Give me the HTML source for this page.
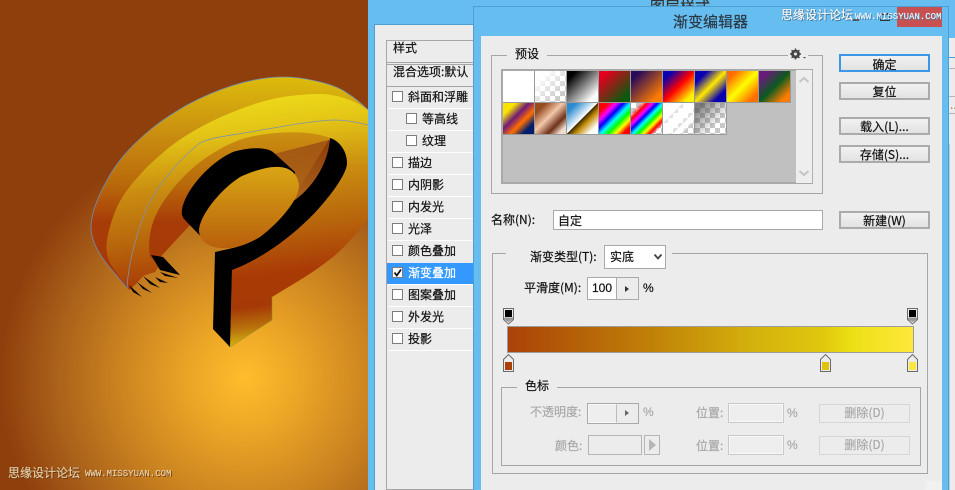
<!DOCTYPE html>
<html><head><meta charset="utf-8">
<style>
html,body{margin:0;padding:0}
#r{position:relative;width:955px;height:490px;overflow:hidden;background:#66bdf0;font:12px/14px "WenQuanYi Zen Hei","Noto Sans CJK SC",sans-serif;color:#111;-webkit-text-stroke:.2px currentColor}
#r div{position:absolute;box-sizing:border-box}
.t{white-space:nowrap}
.g{color:#a9a9a9}
.b{background:linear-gradient(#f2f2f2,#e2e2e2);border:2px solid #ababab;text-align:center;line-height:14px;padding-top:1px}
.cb{width:11px;height:11px;border:1px solid #7d7d7d;background:#fff;left:392px}
.sep{left:388px;width:85px;height:1px;background:#fff}
.sw{width:31px;height:31px;top:71px}
.ck{background-color:#fff;background-image:repeating-conic-gradient(#c8c8c8 0 25%,#fff 0 50%);background-size:10px 10px}
.fs{border:1px solid #a6a6a6}
.in{border:1px solid #c9c9c9;background:#eee;box-shadow:inset 0 0 0 1px #f8f8f8}
.off{background:#ececec;border:1px solid #d6d6d6;color:#a9a9a9;text-align:center;line-height:16px}
</style></head><body><div id="r">

<div style="left:0;top:0;width:368px;height:490px;background:radial-gradient(circle 245px at 245px 378px,#ffbd2c 0,#eca626 22%,#cc8520 50%,#a9601a 78%,#8f3f0c 100%)"></div>
<svg style="position:absolute;left:0;top:0" width="368" height="490" viewBox="0 0 368 490">
<defs>
<linearGradient id="fg" gradientUnits="userSpaceOnUse" x1="230" y1="95" x2="260" y2="347">
<stop offset="0" stop-color="#eedd1a"/><stop offset=".14" stop-color="#e4c616"/><stop offset=".34" stop-color="#c98c10"/><stop offset=".54" stop-color="#b8650c"/><stop offset=".72" stop-color="#a93a06"/><stop offset=".84" stop-color="#a63a06"/><stop offset=".92" stop-color="#b8720c"/><stop offset="1" stop-color="#dcc210"/>
</linearGradient>
<linearGradient id="bg" gradientUnits="userSpaceOnUse" x1="0" y1="77" x2="0" y2="290">
<stop offset="0" stop-color="#dcbc0c"/><stop offset=".28" stop-color="#c98c10"/><stop offset=".5" stop-color="#b96a0a"/><stop offset=".68" stop-color="#a83c08"/><stop offset="1" stop-color="#a63a06"/>
</linearGradient>
<linearGradient id="ov" gradientUnits="userSpaceOnUse" x1="0" y1="167" x2="0" y2="248">
<stop offset="0" stop-color="#d9a514"/><stop offset="1" stop-color="#b8600c"/>
</linearGradient>
<linearGradient id="ho" gradientUnits="userSpaceOnUse" x1="0" y1="132" x2="0" y2="250">
<stop offset="0" stop-color="#a35812"/><stop offset="1" stop-color="#c27a1c" stop-opacity="0"/>
</linearGradient>
</defs>
<path d="M150,257 C147,240 152,222 157,213 C167,192 190,168 207,157 C225,145 240,139 250,137 C275,131 310,130 330,138 L290,203 L215,252 Z" fill="url(#ho)"/>
<path d="M127,288 L110,268 C100,256 91,242 91,227 C91,210 102,188 113,170 C125,152 137,141 150,130 C162,120 175,112 187,105 C215,90 250,77 283,77 C305,77 335,84 347,93 C355,98 362,104 368,110 L368,130 L250,160 L130,290 Z" fill="url(#bg)"/>
<path d="M127,288 L110,268 C100,256 91,242 91,227 C91,210 102,188 113,170 C125,152 137,141 150,130 C162,120 175,112 187,105 C215,90 250,77 283,77 C305,77 335,84 347,93 C355,98 362,104 368,110" fill="none" stroke="#6d8fb0" stroke-width=".8"/>
<path d="M127,288 L110,263 C106,255 106,246 107,240 C109,228 113,216 117,207 C124,192 135,180 147,167 C160,155 172,144 187,135 C205,124 220,117 233,112 C250,105 265,100 283,97 C295,95 310,94 320,94 C335,94 355,100 368,110 L368,220 C355,235 345,247 333,257 C320,267 310,274 300,280 L272,297 L272,320 L230,347 L232,270 C265,258 300,230 320,207 C335,190 347,172 347,163 C347,152 340,141 330,138 C310,130 275,131 250,137 C240,139 225,145 207,157 C190,168 167,192 157,213 C152,222 147,240 150,257 L160,265 L155,272 L143,276 L136,284 Z" fill="url(#fg)"/>
<path d="M127,288 C128,267 135,240 143,217 C150,200 160,184 170,173 C180,160 190,151 200,143 C215,136 235,135 250,132 C280,127 310,121 333,120 C345,120 357,122 368,125" fill="none" stroke="#7d93ad" stroke-width=".8"/>
<path d="M330,138 C340,141 347,152 347,163 C347,172 335,190 320,207 C300,230 265,258 232,270 L230,347 L213,329 L215,252 L233,248 C255,243 275,225 290,203 C305,195 328,170 330,138 Z" fill="#000"/>
<path d="M295,172 L273,152 C265,146 245,148 233,152 C210,162 185,190 182,210 C181,215 183,218 185,220 L207,243 L240,240 L295,190 Z" fill="#000"/>
<path d="M199,230 C200,215 220,190 240,177 C255,170 270,166 280,167 C292,168 299,176 299,187 C298,200 280,222 260,237 C248,244 238,248 227,248 C212,249 199,243 199,230 Z" fill="url(#ov)"/>
<path d="M151,255 L163,257 L180,275 L160,270 Z" fill="#000"/>
<path d="M160,272 L178,278 L165,276 Z M155,277 L168,283 L160,282 Z M143,276 L160,288 L150,284 Z M137,282 L152,293 L143,289 Z M129,285 L142,297 L133,292 Z" fill="#000"/>
<path d="M230,347 L272,320 L272,297" fill="none" stroke="#8f8a30" stroke-width=".5"/>
</svg>
<div class="t" style="left:8px;top:466px;color:#e6cda6;text-shadow:0 0 1px #5a2c08,1px 1px 0 #6b3a10">思缘设计论坛</div>
<div class="t" style="left:85px;top:469px;font:9px/11px 'Liberation Mono',monospace;color:#e6cda6;text-shadow:1px 1px 0 #6b3a10">WWW.MISSYUAN.COM</div>

<!-- layer style dialog -->
<div style="left:368px;top:0;width:587px;height:490px;background:#66bdf0"></div>
<div class="t" style="left:650px;top:-1px;font-size:15px;line-height:16px;color:#333">图层样式</div>
<div style="left:374px;top:24px;width:581px;height:466px;background:#ececec;border:1px solid #4e9fd4;border-right:0;border-bottom:0"></div>
<div style="left:386px;top:40px;width:90px;height:450px;border:1px solid #a6a6a6;border-right:0;background:#ececec"></div>
<div class="t" style="left:393px;top:41px">样式</div>
<div style="left:387px;top:62px;width:88px;height:1px;background:#a6a6a6"></div>
<div style="left:387px;top:64px;width:88px;height:1px;background:#a6a6a6"></div>
<div class="t" style="left:393px;top:65px">混合选项:默认</div>
<div style="left:387px;top:86px;width:88px;height:1px;background:#a6a6a6"></div>

<div style="left:387px;top:263px;width:88px;height:21px;background:#3399ff"></div>
<div class="sep" style="top:108px"></div><div class="sep" style="top:130px"></div><div class="sep" style="top:152px"></div><div class="sep" style="top:174px"></div><div class="sep" style="top:196px"></div><div class="sep" style="top:218px"></div><div class="sep" style="top:240px"></div><div class="sep" style="top:306px"></div><div class="sep" style="top:284px"></div><div class="sep" style="top:328px"></div><div class="sep" style="top:350px"></div>

<div class="cb" style="top:91px"></div><div class="t" style="left:408px;top:90px">斜面和浮雕</div>
<div class="cb" style="left:406px;top:113px"></div><div class="t" style="left:422px;top:112px">等高线</div>
<div class="cb" style="left:406px;top:135px"></div><div class="t" style="left:422px;top:134px">纹理</div>
<div class="cb" style="top:157px"></div><div class="t" style="left:408px;top:156px">描边</div>
<div class="cb" style="top:179px"></div><div class="t" style="left:408px;top:178px">内阴影</div>
<div class="cb" style="top:201px"></div><div class="t" style="left:408px;top:200px">内发光</div>
<div class="cb" style="top:223px"></div><div class="t" style="left:408px;top:222px">光泽</div>
<div class="cb" style="top:245px"></div><div class="t" style="left:408px;top:244px">颜色叠加</div>
<div class="cb" style="top:267px"></div>
<svg style="position:absolute;left:392px;top:267px" width="11" height="11"><path d="M2.5,5.5 L4.8,8.5 L9,2.5" fill="none" stroke="#111" stroke-width="1.8"/></svg>
<div class="t" style="left:408px;top:266px;color:#fff">渐变叠加</div>
<div class="cb" style="top:289px"></div><div class="t" style="left:408px;top:288px">图案叠加</div>
<div class="cb" style="top:311px"></div><div class="t" style="left:408px;top:310px">外发光</div>
<div class="cb" style="top:333px"></div><div class="t" style="left:408px;top:332px">投影</div>

<!-- behind right edge -->
<div style="left:949px;top:0;width:6px;height:38px;background:#66bdf0"></div>
<div style="left:949px;top:57px;width:6px;height:1px;background:#4e9fd4"></div>
<div style="left:949px;top:68px;width:6px;height:1px;background:#b5b5b5"></div>
<div style="left:949px;top:96px;width:6px;height:1px;background:#b5b5b5"></div>
<div class="t" style="left:950px;top:101px;color:#b5721c;font-size:10px">…</div>
<div style="left:949px;top:113px;width:6px;height:1px;background:#b5b5b5"></div>
<div style="left:949px;top:144px;width:6px;height:346px;background:#ececec;border-left:1px solid #c9c9c9"></div>

<!-- gradient editor window -->
<div style="left:473px;top:6px;width:476px;height:484px;background:#66bdf0;border:1px solid #4e9fd4;border-bottom:0"></div>
<div style="left:481px;top:36px;width:461px;height:454px;background:#ececec"></div>
<div class="t" style="left:673px;top:14px;width:80px;font-size:15px;line-height:16px;color:#2a3a46">渐变编辑器</div>
<div style="left:897px;top:7px;width:45px;height:20px;background:#c75050"></div>
<div style="left:853px;top:19px;width:6px;height:2px;background:#555"></div>
<div style="left:880px;top:13px;width:10px;height:8px;border:1px solid #333;border-top-width:2px"></div>
<div class="t" style="left:781px;top:8px;font-size:12px;color:#fff;text-shadow:0 0 1px #27506e,1px 1px 0 #3d7aa5">思缘设计论坛</div>
<div class="t" style="left:855px;top:12px;font:9px/11px 'Liberation Mono',monospace;color:#e8f2fa;text-shadow:1px 1px 0 #3d7aa5">WWW.MISSYUAN.COM</div>

<!-- presets -->
<div class="fs" style="left:491px;top:55px;width:332px;height:139px"></div>
<div style="left:507px;top:48px;width:40px;height:14px;background:#ececec"></div>
<div class="t" style="left:515px;top:47px">预设</div>
<div style="left:788px;top:50px;width:20px;height:10px;background:#ececec"></div>
<svg style="position:absolute;left:790px;top:48px" width="17" height="13" viewBox="0 0 17 13"><circle cx="5.5" cy="6" r="3.4" fill="none" stroke="#444" stroke-width="2"/><path d="M5.5,0.5V11.5M0,6H11M1.6,2.1L9.4,9.9M9.4,2.1L1.6,9.9" stroke="#444" stroke-width="1.4"/><circle cx="5.5" cy="6" r="1.5" fill="#ececec"/><path d="M13,9h3l-1.5,1.5z" fill="#444"/></svg>
<div style="left:501px;top:69px;width:312px;height:115px;background:#c0c0c0;border:2px solid #a8a8a8;border-right:1px solid #b0b0b0"></div>
<div style="left:796px;top:70px;width:16px;height:113px;background:#eeeeee"></div>
<svg style="position:absolute;left:796px;top:70px" width="16" height="113"><path d="M3.5,12L8,8L12.5,12" fill="none" stroke="#c4c4c4" stroke-width="2"/><path d="M3.5,101L8,105L12.5,101" fill="none" stroke="#c4c4c4" stroke-width="2"/></svg>
<div style="left:503px;top:71px;width:288px;height:32px;background:#999"></div>
<div style="left:503px;top:103px;width:224px;height:32px;background:#999"></div>

<div class="sw" style="left:503px;background:#fff"></div>
<div class="sw ck" style="left:535px"></div><div class="sw" style="left:535px;background:linear-gradient(135deg,#fff 15%,rgba(255,255,255,0) 85%)"></div>
<div class="sw" style="left:567px;background:linear-gradient(135deg,#000 15%,#fff 85%)"></div>
<div class="sw" style="left:599px;background:linear-gradient(135deg,#e4001c 15%,#0a5a10 85%)"></div>
<div class="sw" style="left:631px;background:linear-gradient(135deg,#290a59 15%,#ff7c00 85%)"></div>
<div class="sw" style="left:663px;background:linear-gradient(135deg,#0a00b0 15%,#ff0000 50%,#fff000 85%)"></div>
<div class="sw" style="left:695px;background:linear-gradient(135deg,#0a00b0 20%,#ffe800 50%,#0a00b0 80%)"></div>
<div class="sw" style="left:727px;background:linear-gradient(135deg,#ff6e00 15%,#ffff00 50%,#ff6e00 85%)"></div>
<div class="sw" style="left:759px;background:linear-gradient(135deg,#6a1a7a 15%,#0a5a20 50%,#ff7c00 85%)"></div>

<div class="sw" style="top:103px;left:503px;background:linear-gradient(135deg,#f9e400 20%,#6f1a78 42%,#ff6e00 62%,#001e6e 82%)"></div>
<div class="sw" style="top:103px;left:535px;background:linear-gradient(135deg,#974c20 18%,#f2c8aa 45%,#6e3018 70%,#f0dccc 88%)"></div>
<div class="sw" style="top:103px;left:567px;background:linear-gradient(135deg,#2a8bd0 15%,#fff 49%,#3a2a00 50%,#c08800 62%,#fff 85%)"></div>
<div class="sw" style="top:103px;left:599px;background:linear-gradient(135deg,#f00 15%,#f0f 28%,#00f 40%,#0ff 52%,#0f0 64%,#ff0 76%,#f00 88%)"></div>
<div class="sw ck" style="top:103px;left:631px"></div><div class="sw" style="top:103px;left:631px;background:linear-gradient(135deg,rgba(255,0,0,0) 15%,#f00 26%,#f0f 35%,#00f 43%,#0ff 52%,#0f0 61%,#ff0 70%,#f00 79%,rgba(255,0,0,0) 88%)"></div>
<div class="sw ck" style="top:103px;left:663px"></div><div class="sw" style="top:103px;left:663px;background:linear-gradient(135deg,#fff 0 30%,rgba(255,255,255,.3) 36%,#fff 42% 56%,rgba(255,255,255,.3) 62%,#fff 68% 74%,rgba(255,255,255,0) 82%)"></div>
<div class="sw ck" style="top:103px;left:695px"></div><div class="sw" style="top:103px;left:695px;background:linear-gradient(135deg,rgba(70,70,70,.7) 10%,rgba(70,70,70,0) 70%)"></div>

<!-- buttons -->
<div class="b" style="left:839px;top:54px;width:91px;height:18px;border-color:#3c97e8;padding-top:2px">确定</div>
<div class="b" style="left:839px;top:82px;width:91px;height:18px;padding-top:1px">复位</div>
<div class="b" style="left:839px;top:117px;width:91px;height:18px;padding-top:1px">载入(L)...</div>
<div class="b" style="left:839px;top:145px;width:91px;height:18px;padding-top:1px">存储(S)...</div>
<div class="b" style="left:839px;top:211px;width:91px;height:18px;padding-top:1px">新建(W)</div>

<div class="t" style="left:491px;top:213px">名称(N):</div>
<div style="left:553px;top:210px;width:270px;height:20px;background:#fff;border:1px solid #a9a9a9;padding:3px 4px;line-height:14px">自定</div>

<!-- lower group -->
<div class="fs" style="left:492px;top:253px;width:436px;height:221px"></div>
<div style="left:506px;top:248px;width:166px;height:12px;background:#ececec"></div>
<div class="t" style="left:530px;top:250px">渐变类型(T):</div>
<div style="left:604px;top:245px;width:62px;height:24px;background:#fff;border:1px solid #a9a9a9;padding:4px 5px">实底</div>
<svg style="position:absolute;left:653px;top:253px" width="10" height="8"><path d="M1.5,1.5L5,5.5L8.5,1.5" fill="none" stroke="#444" stroke-width="1.8"/></svg>
<div class="t" style="left:524px;top:281px">平滑度(M):</div>
<div style="left:587px;top:277px;width:52px;height:23px;background:#ececec;border:1px solid #a9a9a9"></div>
<div style="left:588px;top:278px;width:29px;height:21px;background:#fff;border-right:1px solid #a9a9a9;text-align:center;line-height:20px;font-family:'Liberation Sans',sans-serif;font-size:12px">100</div>
<svg style="position:absolute;left:624px;top:285px" width="6" height="8"><path d="M1,1L5,4L1,7z" fill="#333"/></svg>
<div class="t" style="left:643px;top:281px;font-family:'Liberation Sans',sans-serif">%</div>

<svg style="position:absolute;left:503px;top:308px" width="12" height="18"><path d="M.5.5H10.5V11.5L5.5,16L.5,11.5Z" fill="#ececec" stroke="#6b6b6b"/><path d="M1,9.5H10V11.5L5.5,14L1,11.5Z" fill="#999"/><rect x="2" y="2" width="7" height="7" fill="#000"/></svg>
<svg style="position:absolute;left:907px;top:308px" width="12" height="18"><path d="M.5.5H10.5V11.5L5.5,16L.5,11.5Z" fill="#ececec" stroke="#6b6b6b"/><path d="M1,9.5H10V11.5L5.5,14L1,11.5Z" fill="#999"/><rect x="2" y="2" width="7" height="7" fill="#000"/></svg>
<div style="left:507px;top:326px;width:407px;height:27px;border:1px solid #9c9c9c;background:linear-gradient(90deg,#aa4208 0,#c08008 35%,#d4b00c 60%,#e0c80e 78%,#ece014 85%,#ffe83c 100%)"></div>
<svg style="position:absolute;left:503px;top:354px" width="12" height="18"><path d="M.5,17.5H10.5V5.5L5.5,.5L.5,5.5Z" fill="#ececec" stroke="#6b6b6b"/><rect x="2" y="8" width="7" height="8" fill="#aa4208"/></svg>
<svg style="position:absolute;left:820px;top:354px" width="12" height="18"><path d="M.5,17.5H10.5V5.5L5.5,.5L.5,5.5Z" fill="#ececec" stroke="#6b6b6b"/><rect x="2" y="8" width="7" height="8" fill="#e0c40c"/></svg>
<svg style="position:absolute;left:907px;top:354px" width="12" height="18"><path d="M.5,17.5H10.5V5.5L5.5,.5L.5,5.5Z" fill="#ececec" stroke="#6b6b6b"/><rect x="2" y="8" width="7" height="8" fill="#ffe63c"/></svg>

<div class="fs" style="left:501px;top:387px;width:420px;height:79px"></div>
<div style="left:517px;top:382px;width:40px;height:12px;background:#ececec"></div>
<div class="t" style="left:525px;top:379px">色标</div>

<div class="t g" style="left:530px;top:405px">不透明度:</div>
<div style="left:587px;top:403px;width:52px;height:21px;background:#ececec;border:1px solid #a9a9a9"></div>
<div style="left:588px;top:404px;width:29px;height:19px;background:#eee;border:1px solid #f8f8f8;border-right:1px solid #bbb"></div>
<svg style="position:absolute;left:624px;top:409px" width="6" height="8"><path d="M1,1L5,4L1,7z" fill="#666"/></svg>
<div class="t g" style="left:643px;top:405px;font-family:'Liberation Sans',sans-serif">%</div>
<div class="t g" style="left:696px;top:406px">位置:</div>
<div class="in" style="left:728px;top:403px;width:56px;height:20px"></div>
<div class="t g" style="left:787px;top:406px;font-family:'Liberation Sans',sans-serif">%</div>
<div class="off" style="left:819px;top:404px;width:91px;height:19px">删除(D)</div>

<div class="t g" style="left:555px;top:439px">颜色:</div>
<div style="left:588px;top:435px;width:54px;height:20px;background:#ececec;border:1px solid #b5b5b5"></div>
<div style="left:644px;top:435px;width:16px;height:20px;background:#ececec;border:1px solid #b5b5b5"></div>
<svg style="position:absolute;left:648px;top:439px" width="9" height="12"><path d="M1,0L8,6L1,12z" fill="#b5b5b5"/></svg>
<div class="t g" style="left:696px;top:439px">位置:</div>
<div class="in" style="left:728px;top:435px;width:56px;height:20px"></div>
<div class="t g" style="left:787px;top:438px;font-family:'Liberation Sans',sans-serif">%</div>
<div class="off" style="left:819px;top:436px;width:91px;height:19px">删除(D)</div>

<div style="left:925px;top:481px;width:17px;height:9px;background:#f1f1f1"></div>
</div></body></html>
